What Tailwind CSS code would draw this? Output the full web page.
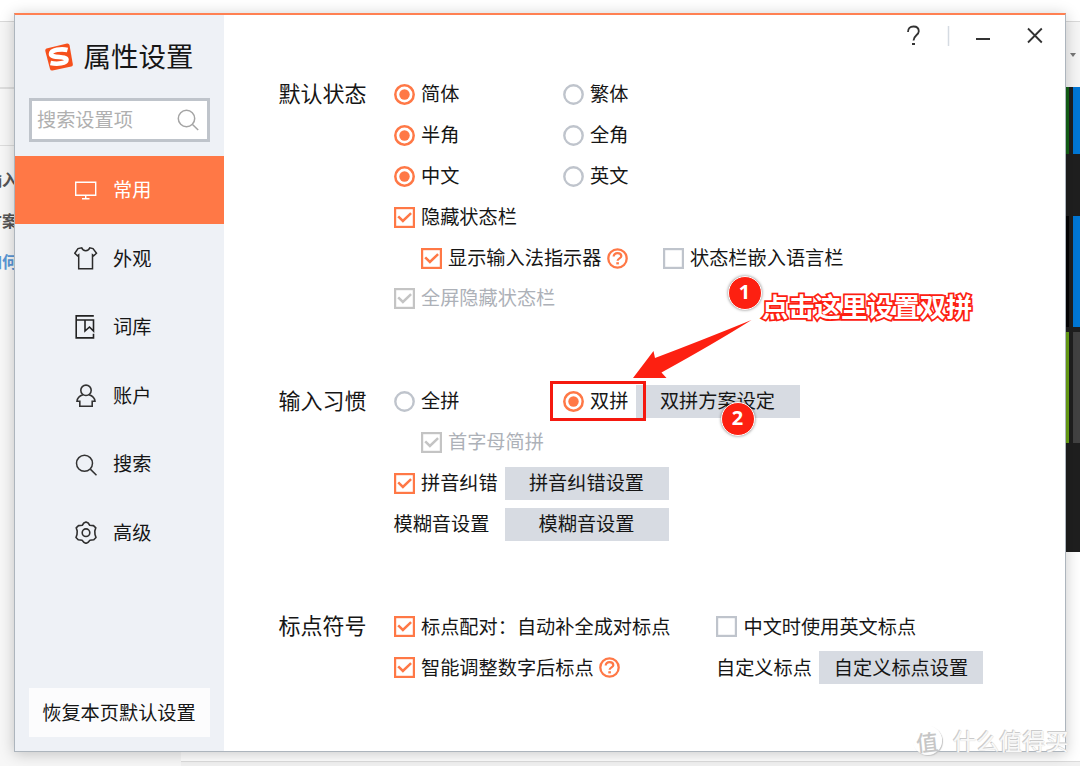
<!DOCTYPE html>
<html lang="zh-CN">
<head>
<meta charset="utf-8">
<title>属性设置</title>
<script src="https://cdn.jsdelivr.net/npm/@tailwindcss/browser@4"></script>
</head>
<body class="relative h-[766px] w-[1080px] overflow-hidden bg-white font-['Noto_Sans_CJK_SC',sans-serif] text-[19.2px] leading-none text-[#161616]">

<svg class="hidden">
  <symbol id="on" viewBox="0 0 21 21"><circle cx="10.5" cy="10.5" r="9.2" fill="#fff" stroke="#ff7846" stroke-width="2.500"/><circle cx="10.5" cy="10.5" r="5.200" fill="#ff7846"/></symbol>
  <symbol id="off" viewBox="0 0 21 21"><circle cx="10.5" cy="10.5" r="9.2" fill="#fff" stroke="#bfc4cc" stroke-width="2.400"/></symbol>
  <symbol id="check" viewBox="0 0 21 21"><rect x="1.1" y="1.1" width="18.8" height="18.8" fill="#fff" stroke="currentColor" stroke-width="2.200"/><path d="M4.200 9.400 8.900 14 17.100 6.100" fill="none" stroke="currentColor" stroke-width="2.500"/></symbol>
  <symbol id="box" viewBox="0 0 21 21"><rect x="1.1" y="1.1" width="18.8" height="18.8" fill="#fff" stroke="#bfc4cc" stroke-width="2.200"/></symbol>
  <symbol id="help" viewBox="0 0 21 21"><circle cx="10.5" cy="10.5" r="9.200" fill="none" stroke="#ff7846" stroke-width="2.300"/><path d="M6.700 8.600C6.700 6.400 8.200 5.200 10.500 5.200s3.800 1.200 3.800 3c0 2.100-3.700 2.200-3.700 4.600" fill="none" stroke="#ff7846" stroke-width="2.200"/><path d="M9.300 14.200h2.600v2.200H9.300z" fill="#ff7846"/></symbol>
</svg>

<!-- Page behind the dialog -->
<div class="flex h-full flex-col">
  <div class="h-[22px] border-b border-[#d9d9d9] bg-white"></div>
  <div class="flex h-[65px] items-center justify-end bg-[#f6f6f6]">
    <svg class="mr-1 h-[4px] w-[6px]" viewBox="0 0 6 4"><path d="M0 0h6L3 4z" fill="#777"/></svg>
  </div>
  <div class="flex flex-1 justify-between">
    <div class="flex w-[181px] flex-col bg-[#f7f7f7]">
      <div class="h-[59px] border-t-2 border-b border-t-[#dedede] border-b-[#ddd]"></div>
      <div class="flex w-[18px] flex-col items-end pt-[21px] text-base font-bold whitespace-nowrap text-[#555]">
        <span class="h-[41px] leading-6">输入</span>
        <span class="h-[41px] leading-6">方案</span>
        <span class="leading-6 text-[#5b97d5]">如何</span>
      </div>
    </div>
    <div class="flex flex-1 flex-col justify-between">
      <div class="flex h-[465px] w-[16px] flex-col self-end bg-[#1f1f1f]">
        <div class="flex h-[67px] justify-between"><div class="w-[5px] bg-[#146317]"></div><div class="w-[7px] bg-[#0078d7]"></div></div>
        <div class="mt-[62px] flex h-[111px] justify-between"><div class="w-[5px] bg-[#050505]"></div><div class="w-[7px] bg-[#0078d7]"></div></div>
        <div class="mt-[5px] flex h-[111px] justify-between"><div class="w-[5px] bg-[#6ba516]"></div><div class="w-[7px] bg-[#424242]"></div></div>
      </div>
      <div class="h-[5px] border-t border-[#dcdcdc] bg-[#f1f1f1]"></div>
    </div>
  </div>
</div>

<!-- Settings dialog -->
<div class="absolute top-[13px] left-[14px] flex h-[739px] w-[1052px] border border-t-2 border-[#adb5bd] border-t-[#ff8052] bg-white shadow-[0_2px_14px_rgba(0,0,0,0.22)]">
  <aside class="flex w-[209px] flex-col bg-[#eef1f6]">
    <div class="flex h-[83px] items-center pl-[30px]">
      <svg class="h-7 w-7" viewBox="0 0 28 28"><path d="M1.500 5.500 22 .5q2-.3 2.500 1.600l3.300 19q.3 2-1.500 2.400L7.500 27.500q-2 .3-2.500-1.500L.3 8Q0 6 1.500 5.500z" fill="#f6501c"/><path d="M22.500 7C16.500 5.500 6 6.800 6 11c0 4.300 15.500 1.800 15.500 5.700 0 3.700-9 4.800-16 3.300" fill="none" stroke="#fff" stroke-width="4.600"/></svg>
      <h1 class="ml-[10.500px] pb-[2px] text-[27.500px]">属性设置</h1>
    </div>
    <div class="mx-[14px] flex h-[44px] w-[181px] items-center justify-between border-[3px] border-[#bfc4cb] bg-white pr-[8px] pl-[5px] text-[#b0b0b0]">
      <span>搜索设置项</span>
      <svg class="h-[22px] w-[22px]" viewBox="0 0 22 22" fill="none" stroke="#a4a4a4" stroke-width="1.500"><circle cx="9.500" cy="9.500" r="8.200"/><path d="m15.500 15.500 5.700 5.500"/></svg>
    </div>
    <nav class="mt-[14px] flex flex-col">
      <div class="flex h-[68px] items-center gap-[15px] bg-[#ff7846] pl-[59px] text-white">
        <svg class="h-6 w-6" viewBox="0 0 24 24" fill="none" stroke="#fff" stroke-width="1.400"><path d="M1.700 4.200h20v13h-20zM11.700 17.500v3M8 20.800h7.500"/></svg><span>常用</span>
      </div>
      <div class="flex h-[68.500px] items-center gap-[15px] pl-[59px]">
        <svg class="h-6 w-6" viewBox="0 0 24 24" fill="none" stroke="#2b2b2b" stroke-width="1.500"><path d="M7.700 1.800C9 5.700 14.500 5.700 15.800 1.800L19 2.600l3.500 4.600-2.800 2.600-1.200-1V22.700H4.700V8.800L3.400 9.800.8 7.200 4 2.600z"/></svg><span>外观</span>
      </div>
      <div class="flex h-[68.500px] items-center gap-[15px] pl-[59px]">
        <svg class="h-6 w-6" viewBox="0 0 24 24" fill="none" stroke="#222" stroke-width="1.600"><path d="M19.800 .9H2.200v22h17.300v-4.200M2.200 5h17.300v11l-4-4-4.500 4V5"/></svg><span>词库</span>
      </div>
      <div class="flex h-[68.500px] items-center gap-[15px] pl-[59px]">
        <svg class="h-6 w-6" viewBox="0 0 24 24" fill="none" stroke="#333" stroke-width="1.600"><circle cx="12" cy="7.300" r="5.200"/><path d="M9 11.800c-3.500 1-5.700 3.500-6 6.500h2.800v5h12.400v-5H21c-.3-3-2.500-5.500-6-6.500"/></svg><span>账户</span>
      </div>
      <div class="flex h-[68.500px] items-center gap-[15px] pl-[59px]">
        <svg class="h-6 w-6" viewBox="0 0 24 24" fill="none" stroke="#333" stroke-width="1.500"><circle cx="10.500" cy="11.300" r="8"/><path d="m16.300 17.100 6.200 6.200"/></svg><span>搜索</span>
      </div>
      <div class="flex h-[68.500px] items-center gap-[15px] pl-[59px]">
        <svg class="h-6 w-6" viewBox="0 0 24 24" fill="none" stroke="#2f2f2f" stroke-width="1.600" stroke-linejoin="round"><path d="M9.800 3 12 2l2.200 1 1.500 2.200 3.800.4 2.300 2.200-1 3.200.2 3.500 1 3-2.200 2.300-3.900.5-1.700 2-2.200 1.100-2.200-1.100-1.700-2-3.900-.5L2 17.500l1-3 .2-3.500-1-3.200 2.300-2.200 3.800-.4z"/><circle cx="12" cy="12.700" r="3.800"/></svg><span>高级</span>
      </div>
    </nav>
    <button class="mx-[14px] mt-auto mb-[14px] h-[49px] w-[181px] bg-[#fcfcfd] pr-[1px]">恢复本页默认设置</button>
  </aside>

  <main class="flex flex-1 flex-col pl-[54.500px]">
    <div class="flex h-[58.500px] items-start justify-end pr-[21px]">
      <svg class="mt-[10px] h-[22px] w-[138px]" viewBox="0 0 138 22" fill="none" stroke="#333" stroke-width="1.800"><path d="M2 7C2 3.200 4 1.500 7.500 1.500s5.300 2 5.300 4.700c0 4-5.300 4.300-5.300 9.300M6 19h3"/><path d="M42.500 1v20" stroke="#d5dbe2" stroke-width="1.500"/><path d="M70 14h14M122 3.500l13.800 14M135.800 3.500l-13.800 14"/></svg>
    </div>

    <section class="flex h-[307px]">
      <h2 class="flex h-[36px] w-[115px] items-center text-[22px]">默认状态</h2>
      <div class="flex flex-col">
        <div class="flex h-[41px]">
          <label class="flex w-[169px] items-center gap-[6.500px]"><svg class="size-[21px]"><use href="#on"/></svg>简体</label>
          <label class="flex items-center gap-[6.500px]"><svg class="size-[21px]"><use href="#off"/></svg>繁体</label>
        </div>
        <div class="flex h-[41px]">
          <label class="flex w-[169px] items-center gap-[6.500px]"><svg class="size-[21px]"><use href="#on"/></svg>半角</label>
          <label class="flex items-center gap-[6.500px]"><svg class="size-[21px]"><use href="#off"/></svg>全角</label>
        </div>
        <div class="flex h-[41px]">
          <label class="flex w-[169px] items-center gap-[6.500px]"><svg class="size-[21px]"><use href="#on"/></svg>中文</label>
          <label class="flex items-center gap-[6.500px]"><svg class="size-[21px]"><use href="#off"/></svg>英文</label>
        </div>
        <label class="flex h-[41px] items-center gap-[6.500px]"><svg class="size-[21px] text-[#ff7846]"><use href="#check"/></svg>隐藏状态栏</label>
        <div class="flex h-[41px] pl-[27px]">
          <label class="flex w-[242px] items-center gap-[6.500px]"><svg class="size-[21px] text-[#ff7846]"><use href="#check"/></svg>显示输入法指示器<svg class="-ml-[1px] size-[21px]"><use href="#help"/></svg></label>
          <label class="flex items-center gap-[6.500px]"><svg class="size-[21px]"><use href="#box"/></svg>状态栏嵌入语言栏</label>
        </div>
        <label class="flex h-[39px] items-center gap-[6.500px] text-[#adb1b8]"><svg class="size-[21px] text-[#c4c4c4]"><use href="#check"/></svg>全屏隐藏状态栏</label>
      </div>
    </section>

    <section class="flex h-[225.500px]">
      <h2 class="flex h-[36px] w-[115px] items-center text-[22px]">输入习惯</h2>
      <div class="flex flex-col">
        <div class="flex h-[41px] items-center">
          <label class="flex w-[169px] items-center gap-[6.500px]"><svg class="size-[21px]"><use href="#off"/></svg>全拼</label>
          <label class="flex w-[73px] items-center gap-[6.500px] whitespace-nowrap"><svg class="size-[21px] shrink-0"><use href="#on"/></svg>双拼</label>
          <button class="h-[33px] w-[164px] bg-[#d7dbe2]">双拼方案设定</button>
        </div>
        <label class="flex h-[41px] items-center gap-[6.500px] pl-[27px] text-[#adb1b8]"><svg class="size-[21px] text-[#c4c4c4]"><use href="#check"/></svg>首字母简拼</label>
        <div class="flex h-[41px] items-center">
          <label class="flex w-[111px] items-center gap-[6.500px] whitespace-nowrap"><svg class="size-[21px] shrink-0 text-[#ff7846]"><use href="#check"/></svg>拼音纠错</label>
          <button class="h-[33px] w-[164px] bg-[#d7dbe2]">拼音纠错设置</button>
        </div>
        <div class="flex h-[41px] items-center">
          <span class="w-[111px]">模糊音设置</span>
          <button class="h-[33px] w-[164px] bg-[#d7dbe2]">模糊音设置</button>
        </div>
      </div>
    </section>

    <section class="flex">
      <h2 class="flex h-[36px] w-[115px] items-center text-[22px]">标点符号</h2>
      <div class="flex flex-col">
        <div class="flex h-[41px]">
          <label class="flex w-[322.500px] items-center gap-[6.500px]"><svg class="size-[21px] text-[#ff7846]"><use href="#check"/></svg>标点配对：自动补全成对标点</label>
          <label class="flex items-center gap-[6.500px]"><svg class="size-[21px]"><use href="#box"/></svg>中文时使用英文标点</label>
        </div>
        <div class="flex h-[41px] items-center">
          <label class="flex w-[322.500px] items-center gap-[6.500px]"><svg class="size-[21px] text-[#ff7846]"><use href="#check"/></svg>智能调整数字后标点<svg class="-ml-[1px] size-[21px]"><use href="#help"/></svg></label>
          <span class="w-[103px]">自定义标点</span>
          <button class="h-[33px] w-[164px] bg-[#d7dbe2]">自定义标点设置</button>
        </div>
      </div>
    </section>
  </main>
</div>

<!-- Annotations -->
<div class="absolute top-[381px] left-[550px] h-[40px] w-[96px] border-3 border-[#f5190f]"></div>
<svg class="absolute top-[318px] left-[630px] h-[62px] w-[124px]" viewBox="0 0 124 62"><path d="M121.500 2Q70 23 25 40L23.500 33 3 60 36.500 60 31.500 54.500Q85 25 121.500 2z" fill="#fd2011"/></svg>
<div class="absolute top-[276px] left-[728px] flex size-[34px] items-center justify-center rounded-full border-[1.500px] border-white bg-[#fd2011] pr-[1px] pb-[2px] font-['Open_Sans',sans-serif] text-[20px] font-bold text-white shadow-[0_0_3px_rgba(0,0,0,0.5)]">1</div>
<div class="absolute top-[402px] left-[721px] flex size-[34px] items-center justify-center rounded-full border-[1.500px] border-white bg-[#fd2011] pr-[1px] pb-[2px] font-['Open_Sans',sans-serif] text-[20px] font-bold text-white shadow-[0_0_3px_rgba(0,0,0,0.5)]">2</div>
<div class="absolute top-[293px] left-[762px] text-[26.300px] font-bold whitespace-nowrap text-white [-webkit-text-stroke:3.500px_#fd2011] [paint-order:stroke_fill]">点击这里设置双拼</div>

<!-- Watermark -->
<div class="absolute top-[726px] left-[913px] flex items-center gap-[11px] whitespace-nowrap text-white">
  <div class="flex size-[29px] items-center justify-center rounded-full bg-white/90 text-[22px] font-medium text-[#c6c6c6] shadow-[1px_1px_1px_#c4c4c4]"><span class="-rotate-6">值</span></div>
  <span class="text-[23.200px] text-[#f8f8f8] [text-shadow:-1px_-1px_0_#cbcbcb,0_0_1px_#c4c4c4]">什么值得买</span>
</div>
</body>
</html>
